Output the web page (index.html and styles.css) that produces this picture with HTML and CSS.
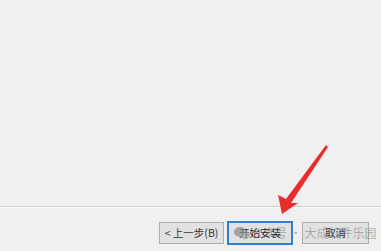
FILE: index.html
```html
<!DOCTYPE html>
<html lang="zh-CN">
<head>
    <meta charset="UTF-8">
    <title>安装向导</title>
    <link rel="stylesheet" href="styles.css">
</head>
<body>
    <div class="wizard">
        <div class="page-body"></div>
        <div class="separator"></div>
        <div class="footer">
            <button class="btn">&lt; 上一步(B)</button>
            <button class="btn btn-default">开始安装</button>
            <button class="btn btn-cancel">取消</button>
        </div>
    </div>

    <!-- red arrow pointing at the install button -->
    <svg class="arrow" width="381" height="251" viewBox="0 0 381 251">
        <polygon points="282,214 278,195 286,199 326,145 328,147 291,203 298,203" fill="#ec2b2b"/>
    </svg>

    <!-- watermark -->
    <div class="watermark">
        <svg class="wm-logo" width="16" height="14" viewBox="0 0 16 14">
            <ellipse cx="6" cy="6" rx="6" ry="5" fill="#8a8a8a"/>
            <ellipse cx="11" cy="9" rx="5" ry="4.2" fill="#9a9a9a"/>
        </svg>
        <span>公众号 · 大成软件乐园</span>
    </div>
</body>
</html>
```

FILE: styles.css
```css
* {
    margin: 0;
    padding: 0;
    box-sizing: border-box;
}

body {
    background-color: #f0f0f0;
    font-family: "Noto Sans CJK SC", "Noto Sans", sans-serif;
    font-size: 12px;
    width: 381px;
    height: 251px;
    overflow: hidden;
    position: relative;
}

.wizard {
    display: flex;
    flex-direction: column;
    height: 251px;
}

.page-body {
    height: 206px;
}

.separator {
    border-top: 1px solid #cdcdcd;
    border-bottom: 1px solid #fbfbfb;
}

.footer {
    display: flex;
    justify-content: flex-end;
    padding: 14px 12px 0 0;
}

.btn {
    width: 65px;
    height: 22px;
    background-color: #e1e1e1;
    border: 1px solid #adadad;
    color: #333;
    font-family: inherit;
    font-size: 10.5px;
    line-height: 20px;
}

.btn-default {
    width: 66px;
    height: 24px;
    margin: -1px 0 0 3px;
    border: 2px solid #2f7fd0;
    color: #222;
}

.btn-cancel {
    width: 67px;
    margin-left: 9px;
    color: #333;
}

.arrow {
    position: absolute;
    left: 0;
    top: 0;
}

/* watermark lies over the buttons */
.watermark {
    position: absolute;
    left: 234px;
    top: 226px;
    display: flex;
    align-items: center;
    gap: 1px;
    color: rgba(110, 110, 110, 0.5);
    font-size: 12px;
    line-height: 14px;
    white-space: nowrap;
}

.wm-logo {
    opacity: 0.7;
}
```
